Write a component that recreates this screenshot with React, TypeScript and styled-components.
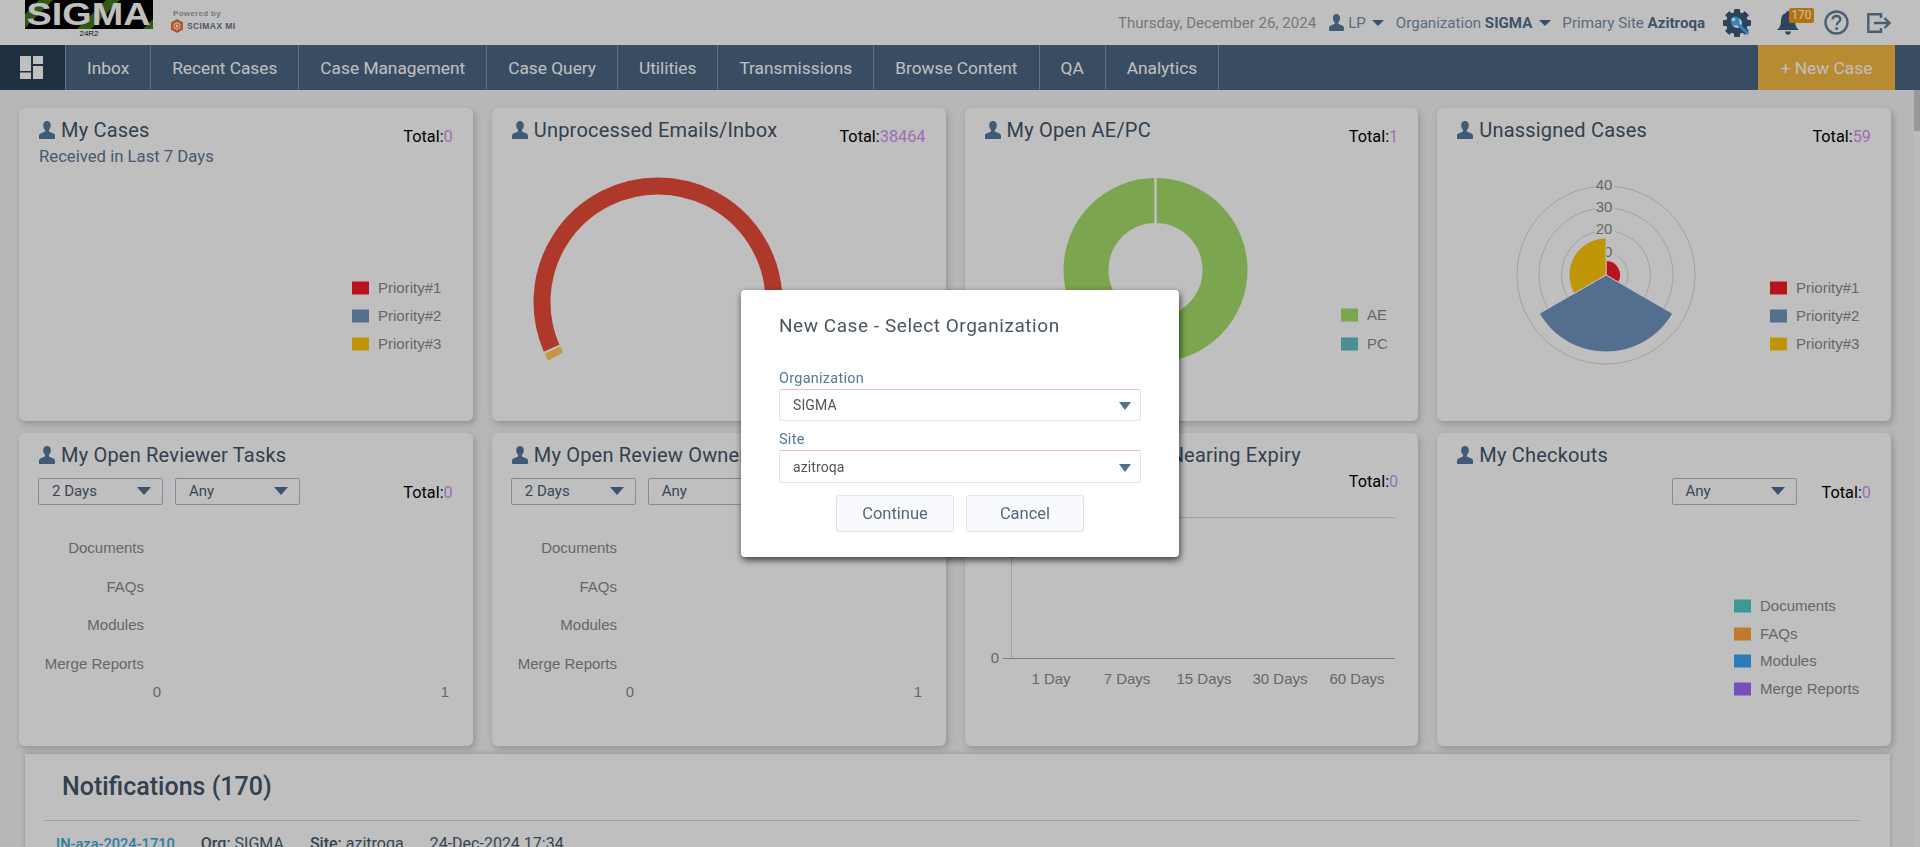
import React from "react";
import styled, { createGlobalStyle } from "styled-components";

const Global = createGlobalStyle`
  html, body { margin: 0; padding: 0; height: 100%; overflow: hidden; }
  body { font-family: Roboto, "Liberation Sans", sans-serif; background: #f4f4f4; }
  #root { height: 100%; }
  * { box-sizing: border-box; }
`;

const Page = styled.div`display:flex;flex-direction:column;height:847px;width:1920px;background:#f4f4f4;`;
const TopBar = styled.header`display:flex;align-items:flex-start;height:45px;background:#fff;flex:none;`;
const LogoWrap = styled.div`margin-left:25px;width:128px;display:flex;flex-direction:column;align-items:center;`;
const Version = styled.div`font:400 8px/10px "Liberation Sans",sans-serif;color:#222;margin-top:0;`;
const Powered = styled.div`margin-left:18px;padding-top:9px;display:flex;flex-direction:column;`;
const PoweredBy = styled.div`font:700 8px/10px "Liberation Sans",sans-serif;color:#a4a4a4;margin-left:2px;letter-spacing:.3px;`;
const Scimax = styled.div`display:flex;align-items:center;gap:4px;margin-top:0;font:700 8.5px/14px "Liberation Sans",sans-serif;color:#6a7692;letter-spacing:.4px;`;
const TopRight = styled.div`margin-left:auto;display:flex;align-items:center;height:45px;padding-right:28px;`;
const DateText = styled.span`font-size:15.1px;color:#9ea1a6;margin-right:13px;`;
const Meta = styled.span<{ $ml?: number }>`font-size:15.1px;color:#7b91a8;white-space:nowrap;margin-left:${p => p.$ml ?? 0}px;b{font-weight:700;color:#557089;}`;
const TopCaret = styled.span<{ $ml: number; $mr: number }>`
  width:0;height:0;border-left:6px solid transparent;border-right:6px solid transparent;border-top:6px solid #476a8c;
  margin-left:${p => p.$ml}px;margin-right:${p => p.$mr}px;
`;
const IconSlot = styled.span<{ $ml: number }>`display:inline-flex;margin-left:${p => p.$ml}px;position:relative;`;
const Badge = styled.span`position:absolute;left:12px;top:-3px;width:25px;height:15px;border-radius:2px;background:#f09a10;color:#fff;font-size:12px;line-height:15px;text-align:center;`;

const Nav = styled.nav`display:flex;height:45px;background:#4c6783;flex:none;`;
const DashBtn = styled.div`width:66px;background:#2a4257;display:flex;align-items:center;justify-content:center;border-right:1px solid #7f99b3;flex:none;padding-right:2px;`;
const NavItem = styled.div`display:flex;align-items:center;padding:0 21px;font-size:17.3px;color:#fff;border-right:1px solid #7f99b3;white-space:nowrap;`;
const NewCase = styled.div`margin-left:auto;margin-right:25px;width:137px;background:#f6b942;color:#fff;font-size:17.3px;display:flex;align-items:center;justify-content:center;`;

const Body = styled.div`flex:1;display:flex;min-height:0;`;
const Content = styled.main`flex:1;min-width:0;overflow:hidden;padding:18px 22px 0 19px;`;
const Track = styled.div`width:6px;flex:none;background:#fafafa;`;
const Thumb = styled.div`height:41px;background:#cbcbcb;`;

const Grid = styled.div`display:grid;grid-template-columns:repeat(4,453.75px);grid-auto-rows:313px;column-gap:19px;row-gap:12px;`;
const Card = styled.section`background:#fff;border-radius:6px;box-shadow:2px 3px 7px rgba(0,0,0,.2);display:flex;flex-direction:column;overflow:hidden;`;
const Head = styled.div<{ $h?: number }>`height:${p => p.$h ?? 72}px;flex:none;display:flex;justify-content:space-between;align-items:flex-start;padding:12px 20px 0 20px;`;
const HeadBlock = styled.div`display:flex;flex-direction:column;`;
const Title = styled.h3`margin:0;display:flex;align-items:center;gap:6px;height:20px;font-size:20px;font-weight:400;letter-spacing:.2px;color:#44566a;white-space:nowrap;`;
const Sub = styled.div`font-size:16.7px;line-height:20px;color:#5f7995;margin-top:7px;`;
const Total = styled.div<{ $mt?: number }>`font-size:16.3px;color:#000;line-height:20px;margin-top:${p => p.$mt ?? 7}px;white-space:nowrap;span{color:#d392f5;}`;
const Controls = styled.div`display:flex;align-items:flex-start;padding:0 20px 0 19px;gap:12px;height:39px;flex:none;`;
const MiniSelect = styled.div`width:125px;height:27px;border:1px solid #a9bdd3;border-radius:2px;display:flex;align-items:center;justify-content:space-between;padding:0 11px 2px 13px;font-size:15px;color:#4d6076;`;
const MiniCaret = styled.span`width:0;height:0;border-left:7px solid transparent;border-right:7px solid transparent;border-top:8px solid #4f7092;`;
const Chart = styled.svg`display:block;width:454px;flex:none;overflow:visible;font-family:"Liberation Sans",Arial,sans-serif;font-size:15px;fill:#8a8a8a;`;

const Notif = styled.section`background:#fff;margin:8px 0 0 6px;width:1865px;height:400px;box-shadow:0 0 5px rgba(0,0,0,.2);padding:0 31px 0 19px;`;
const NotifTitle = styled.h2`margin:0;height:67px;border-bottom:1px solid #d8d8d8;padding:18px 0 0 18px;font-size:25px;line-height:30px;font-weight:500;color:#44566a;`;
const NotifRow = styled.div`display:flex;padding:13px 0 0 12px;font-size:16px;line-height:20px;color:#4a5c70;gap:26px;b{font-weight:500;}`;
const NotifLink = styled.a`color:#3aa8d8;font-weight:500;font-size:14.6px;`;

const Overlay = styled.div`position:fixed;inset:0;background:rgba(0,0,0,.25);display:flex;align-items:center;justify-content:center;`;
const Modal = styled.div`width:438px;height:267px;background:#fff;border-radius:4px;box-shadow:1px 3px 7px rgba(0,0,0,.7);padding:23px 38px 0;font-family:Roboto,sans-serif;`;
const ModalTitle = styled.h4`margin:0;font-size:19px;line-height:26px;font-weight:400;letter-spacing:.55px;color:#4a5560;`;
const Label = styled.label<{ $mt: number }>`display:block;font-size:14.5px;line-height:18px;letter-spacing:.25px;color:#55759a;margin-top:${p => p.$mt}px;`;
const Field = styled.div<{ $h: number }>`height:${p => p.$h}px;margin-top:1px;border:1px solid #dfe6f0;border-top:1px solid #f7b5b5;border-radius:3px;display:flex;align-items:center;justify-content:space-between;padding:0 9px 0 13px;font-size:14px;letter-spacing:.1px;color:#50565c;`;
const FieldCaret = styled.span`width:0;height:0;border-left:6.5px solid transparent;border-right:6.5px solid transparent;border-top:8px solid #4f7092;margin-top:2px;`;
const Buttons = styled.div`display:flex;justify-content:center;gap:12px;margin-top:12px;`;
const Btn = styled.button`width:118px;height:37px;background:#f8fafd;border:1px solid #dbe4f0;border-radius:3px;font:400 16.5px Roboto,sans-serif;color:#556777;`;

const Person = ({ w = 16, h = 18 }: { w?: number; h?: number }) => (
  <svg width={w} height={h} viewBox="0 0 16 18" style={{ flex: "none" }}>
    <path fill="#547a9c" d="M8 0c2.4 0 3.8 1.8 3.8 4.3 0 2-.9 3.6-1.8 4.6-.3.5-.2 1.4.4 1.8l3.6 1.5c1.3.6 2 1.4 2 2.6v2.2c0 .6-.4 1-1 1H1c-.6 0-1-.4-1-1v-2.2c0-1.2.7-2 2-2.6l3.6-1.5c.6-.4.7-1.3.4-1.8-.9-1-1.8-2.6-1.8-4.6C4.2 1.8 5.6 0 8 0z" />
  </svg>
);

const Gear = () => (
  <svg width="28" height="28" viewBox="0 0 28 28">
    <g fill="#3a5a78">
      {[0, 45, 90, 135, 180, 225, 270, 315].map(a => (
        <rect key={a} x="11" y="0" width="6" height="6" rx="1" transform={`rotate(${a} 14 14)`} />
      ))}
    </g>
    <circle cx="14" cy="14" r="8" fill="none" stroke="#3a5a78" strokeWidth="6" />
    <circle cx="12" cy="12" r="4.5" fill="#42b0ff" />
    <circle cx="10.5" cy="10.5" r="1.8" fill="#fff" />
    <path d="M13 13l12 12" stroke="#42b0ff" strokeWidth="3" />
  </svg>
);

const Bell = () => (
  <svg width="22" height="24" viewBox="0 0 22 24">
    <path fill="#3b5c80" d="M11 0c1.2 0 2 .8 2 1.9 3.4.9 5 3.7 5 7.6 0 5 1.5 7.4 4 9.5H0c2.5-2.1 4-4.5 4-9.5 0-3.9 1.6-6.7 5-7.6C9 .8 9.8 0 11 0zM8 20.5h6c-.3 2-1.5 3.3-3 3.3s-2.7-1.3-3-3.3z" />
  </svg>
);

const Help = () => (
  <svg width="25" height="25" viewBox="0 0 25 25" fill="none">
    <circle cx="12.5" cy="12.5" r="11" stroke="#5f7f9f" strokeWidth="2.4" />
    <path d="M8.7 9.6c0-2.2 1.6-3.6 3.8-3.6s3.8 1.3 3.8 3.3c0 2.9-3.6 2.9-3.6 5.9" stroke="#5f7f9f" strokeWidth="2.4" />
    <circle cx="12.7" cy="18.5" r="1.5" fill="#5f7f9f" />
  </svg>
);

const Logout = () => (
  <svg width="25" height="20" viewBox="0 0 25 20" fill="none" stroke="#5f7f9f" strokeWidth="2.4">
    <path d="M14 5V1.3H1.3v17.4H14V15" />
    <path d="M7 10h15M17.5 5l5 5-5 5" />
  </svg>
);

const DashIcon = () => (
  <svg width="23" height="23" viewBox="0 0 23 23" fill="#fff">
    <rect x="0" y="0" width="11" height="15" />
    <rect x="0" y="16.5" width="11" height="6.5" />
    <rect x="13" y="0" width="10" height="8" />
    <rect x="13" y="10" width="10" height="13" />
  </svg>
);

const Logo = () => (
  <svg width="128" height="29" viewBox="0 0 128 29" style={{ display: "block" }}>
    <rect width="128" height="29" fill="#000" />
    <g fill="#44761c">
      <path d="M0 14L14 0h14L0 28zM52 29L81 0h14L66 29zM118 29l10-10v10z" />
    </g>
    <text x="63.5" y="25" textAnchor="middle" fontFamily="Liberation Sans, sans-serif" fontWeight="700" fontSize="31" fill="#fff" textLength="124" lengthAdjust="spacingAndGlyphs">SIGMA</text>
  </svg>
);

const ScimaxIcon = () => (
  <svg width="12" height="14" viewBox="0 0 12 14">
    <path d="M6 0l6 3.5v7L6 14l-6-3.5v-7z" fill="#f3702a" />
    <path d="M6 3l3.4 2v4L6 11 2.6 9V5z" fill="#fff" />
    <circle cx="6" cy="7" r="2" fill="none" stroke="#f3702a" strokeWidth="1.2" />
  </svg>
);

const pt = (cx: number, cy: number, r: number, a: number) => {
  const t = (a * Math.PI) / 180;
  return [cx + r * Math.sin(t), cy - r * Math.cos(t)] as const;
};
const arc = (cx: number, cy: number, r: number, a0: number, a1: number) => {
  const [x0, y0] = pt(cx, cy, r, a0);
  const [x1, y1] = pt(cx, cy, r, a1);
  return `M${x0} ${y0}A${r} ${r} 0 ${a1 - a0 > 180 ? 1 : 0} 1 ${x1} ${y1}`;
};
const sector = (cx: number, cy: number, r: number, a0: number, a1: number) => {
  const [x0, y0] = pt(cx, cy, r, a0);
  const [x1, y1] = pt(cx, cy, r, a1);
  return `M${cx} ${cy}L${x0} ${y0}A${r} ${r} 0 0 1 ${x1} ${y1}Z`;
};

const CH = 241;
const VIEW = `0 72 454 ${CH}`;
const CH2 = 229;
const VIEW2 = `0 84 454 ${CH2}`;

const Legend = ({ x, items }: { x: number; items: { c: string; t: string; y: number }[] }) => (
  <g>
    {items.map(i => (
      <g key={i.t}>
        <rect x={x} y={i.y - 6.5} width={17} height={13} fill={i.c} />
        <text x={x + 26} y={i.y} dy=".35em">{i.t}</text>
      </g>
    ))}
  </g>
);

const P = ["#f51b28", "#7093c0", "#ffc80a"];
const prio = [
  { c: P[0], t: "Priority#1", y: 180 },
  { c: P[1], t: "Priority#2", y: 208 },
  { c: P[2], t: "Priority#3", y: 236 },
];

const BarsChart = () => (
  <Chart height={CH2} viewBox={VIEW2}>
    {[["Documents", 115], ["FAQs", 154], ["Modules", 192], ["Merge Reports", 231]].map(([t, y]) => (
      <text key={t as string} x={125} y={y as number} dy=".35em" textAnchor="end">{t}</text>
    ))}
    <text x={138} y={259} dy=".35em" textAnchor="middle">0</text>
    <text x={426} y={259} dy=".35em" textAnchor="middle">1</text>
  </Chart>
);

const Select = ({ children }: { children: React.ReactNode }) => (
  <MiniSelect>{children}<MiniCaret /></MiniSelect>
);

const navItems = ["Inbox", "Recent Cases", "Case Management", "Case Query", "Utilities", "Transmissions", "Browse Content", "QA", "Analytics"];

const PushedTotal = styled(Total)<{ $ml?: string }>`margin-left:${p => p.$ml ?? "auto"};`;
const EndControls = styled(Controls)`justify-content:flex-end;`;

export default function App() {
  const c2 = { x: 166, y: 194 };
  const c3 = { x: 190.5, y: 162 };
  const c4 = { x: 169, y: 167 };
  return (
    <Page>
      <Global />
      <TopBar>
        <LogoWrap>
          <Logo />
          <Version>24R2</Version>
        </LogoWrap>
        <Powered>
          <PoweredBy>Powered by</PoweredBy>
          <Scimax><ScimaxIcon />SCIMAX MI</Scimax>
        </Powered>
        <TopRight>
          <DateText>Thursday, December 26, 2024</DateText>
          <Person w={15} h={17} />
          <Meta $ml={4}>LP</Meta>
          <TopCaret $ml={6} $mr={12} />
          <Meta>Organization <b>SIGMA</b></Meta>
          <TopCaret $ml={7} $mr={11} />
          <Meta>Primary Site <b>Azitroqa</b></Meta>
          <IconSlot $ml={18}><Gear /></IconSlot>
          <IconSlot $ml={26}><Bell /><Badge>170</Badge></IconSlot>
          <IconSlot $ml={25}><Help /></IconSlot>
          <IconSlot $ml={18}><Logout /></IconSlot>
        </TopRight>
      </TopBar>
      <Nav>
        <DashBtn><DashIcon /></DashBtn>
        {navItems.map(n => <NavItem key={n}>{n}</NavItem>)}
        <NewCase>+ New Case</NewCase>
      </Nav>
      <Body>
        <Content>
          <Grid>
            <Card>
              <Head>
                <HeadBlock>
                  <Title><Person />My Cases</Title>
                  <Sub>Received in Last 7 Days</Sub>
                </HeadBlock>
                <Total>Total:<span>0</span></Total>
              </Head>
              <Chart height={CH} viewBox={VIEW}><Legend x={333} items={prio} /></Chart>
            </Card>
            <Card>
              <Head>
                <Title><Person />Unprocessed Emails/Inbox</Title>
                <Total>Total:<span>38464</span></Total>
              </Head>
              <Chart height={CH} viewBox={VIEW}>
                <path d={arc(c2.x, c2.y, 116, 246.5, 360)} fill="none" stroke="#e84d39" strokeWidth="17" />
                <path d={arc(c2.x, c2.y, 116, 0, 113.5)} fill="none" stroke="#e84d39" strokeWidth="17" />
                <path d={arc(c2.x, c2.y, 116, 242, 245.5)} fill="none" stroke="#ffcd50" strokeWidth="17" />
              </Chart>
            </Card>
            <Card>
              <Head>
                <Title><Person />My Open AE/PC</Title>
                <Total>Total:<span>1</span></Total>
              </Head>
              <Chart height={CH} viewBox={VIEW}>
                <circle cx={c3.x} cy={c3.y} r={69.5} fill="none" stroke="#a4dc69" strokeWidth="45" />
                <path d={`M${c3.x} 70V117`} stroke="#fff" strokeWidth="2.5" />
                <Legend x={376} items={[{ c: "#a4dc69", t: "AE", y: 207 }, { c: "#5fc0bf", t: "PC", y: 236 }]} />
              </Chart>
            </Card>
            <Card>
              <Head>
                <Title><Person />Unassigned Cases</Title>
                <Total>Total:<span>59</span></Total>
              </Head>
              <Chart height={CH} viewBox={VIEW}>
                {[89, 67, 44.5, 22].map(r => (
                  <circle key={r} cx={c4.x} cy={c4.y} r={r} fill="none" stroke="#d8d8d8" />
                ))}
                {[["40", 77], ["30", 99], ["20", 121], ["10", 144]].map(([t, y]) => (
                  <g key={t as string}>
                    <rect x={c4.x - 11} y={(y as number) - 7} width={20} height={14} fill="#fff" />
                    <text x={c4.x - 2} y={y as number} dy=".35em" textAnchor="middle">{t}</text>
                  </g>
                ))}
                <path d={sector(c4.x, c4.y, 14.5, 0, 120)} fill={P[0]} stroke="#fff" />
                <path d={sector(c4.x, c4.y, 77, 120, 240)} fill={P[1]} stroke="#fff" />
                <path d={sector(c4.x, c4.y, 37, 240, 360)} fill={P[2]} stroke="#fff" />
                <Legend x={333} items={prio} />
              </Chart>
            </Card>

            <Card>
              <Head $h={45}><Title><Person />My Open Reviewer Tasks</Title></Head>
              <Controls>
                <Select>2 Days</Select>
                <Select>Any</Select>
                <PushedTotal $mt={5}>Total:<span>0</span></PushedTotal>
              </Controls>
              <BarsChart />
            </Card>
            <Card>
              <Head $h={45}><Title><Person />My Open Review Owner Tasks</Title></Head>
              <Controls>
                <Select>2 Days</Select>
                <Select>Any</Select>
                <PushedTotal $mt={5}>Total:<span>0</span></PushedTotal>
              </Controls>
              <BarsChart />
            </Card>
            <Card>
              <Head>
                <Title><Person />My Review Cases Nearing Expiry</Title>
                <Total $mt={27}>Total:<span>0</span></Total>
              </Head>
              <Chart height={CH} viewBox={VIEW}>
                <path d="M46 84.5H430" stroke="#d8d8d8" />
                <path d="M46.5 84V225" stroke="#d8d8d8" />
                <path d="M38 225.5H430" stroke="#aaa" />
                <text x={30} y={225} dy=".35em" textAnchor="middle">0</text>
                {[["1 Day", 86], ["7 Days", 162], ["15 Days", 239], ["30 Days", 315], ["60 Days", 392]].map(([t, x]) => (
                  <text key={t as string} x={x as number} y={246} dy=".35em" textAnchor="middle">{t}</text>
                ))}
              </Chart>
            </Card>
            <Card>
              <Head $h={45}><Title><Person />My Checkouts</Title></Head>
              <EndControls>
                <Select>Any</Select>
                <PushedTotal $mt={5} $ml="13px">Total:<span>0</span></PushedTotal>
              </EndControls>
              <Chart height={CH2} viewBox={VIEW2}>
                <Legend x={297} items={[
                  { c: "#51cdc5", t: "Documents", y: 173 },
                  { c: "#ffa33d", t: "FAQs", y: 201 },
                  { c: "#38a5f5", t: "Modules", y: 228 },
                  { c: "#9b6bff", t: "Merge Reports", y: 256 },
                ]} />
              </Chart>
            </Card>
          </Grid>
          <Notif>
            <NotifTitle>Notifications (170)</NotifTitle>
            <NotifRow>
              <NotifLink>IN-aza-2024-1710</NotifLink>
              <span><b>Org:</b> SIGMA</span>
              <span><b>Site:</b> azitroqa</span>
              <span>24-Dec-2024 17:34</span>
            </NotifRow>
          </Notif>
        </Content>
        <Track><Thumb /></Track>
      </Body>
      <Overlay>
        <Modal>
          <ModalTitle>New Case - Select Organization</ModalTitle>
          <Label $mt={31}>Organization</Label>
          <Field $h={32}>SIGMA<FieldCaret /></Field>
          <Label $mt={10}>Site</Label>
          <Field $h={33}>azitroqa<FieldCaret /></Field>
          <Buttons>
            <Btn>Continue</Btn>
            <Btn>Cancel</Btn>
          </Buttons>
        </Modal>
      </Overlay>
    </Page>
  );
}
